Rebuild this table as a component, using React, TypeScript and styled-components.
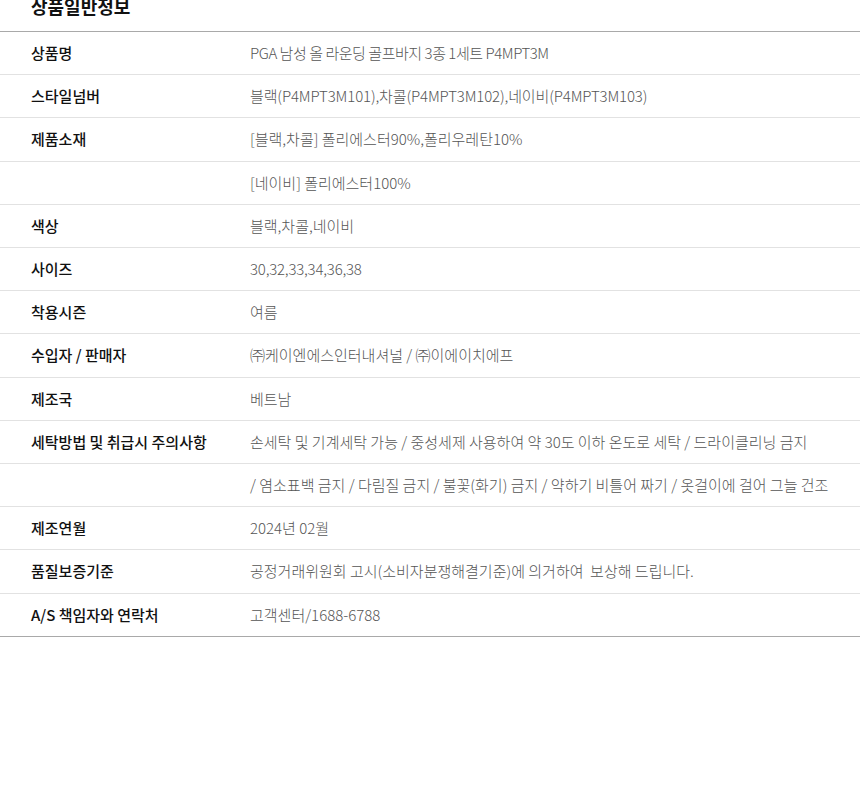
import React from "react";
import styled, { createGlobalStyle } from "styled-components";

const Global = createGlobalStyle`
  html, body { margin: 0; padding: 0; background: #fff; }
  body { font-family: "Noto Sans CJK KR", "Noto Sans", sans-serif; overflow: hidden; }
`;

const Section = styled.section`
  width: 860px;
`;

const Title = styled.h2`
  margin: -3px 0 16px;
  padding-left: 31px;
  font-size: 18px;
  line-height: 18px;
  font-weight: 700;
  color: #111;
`;

const Table = styled.table`
  width: 100%;
  border-collapse: collapse;
  border-top: 1px solid #a9a9a9;
  border-bottom: 1px solid #a9a9a9;
`;

const Row = styled.tr`
  border-top: 1px solid #e2e2e2;
  &:first-child { border-top: none; }
`;

const Label = styled.th`
  width: 219px;
  padding: 11px 0 11px 31px;
  text-align: left;
  font-size: 15px;
  line-height: 20.2px;
  font-weight: 500;
  color: #111;
  white-space: nowrap;
  vertical-align: middle;
`;

const Value = styled.td<{ $ls: number }>`
  padding: 11px 0;
  font-size: 15px;
  line-height: 20.2px;
  letter-spacing: ${(p) => p.$ls}px;
  font-weight: 300;
  color: #555;
  white-space: pre;
  vertical-align: middle;
`;

type Item = { label: string; value: string; ls?: number };

const rows: Item[] = [
  { label: "상품명", value: "PGA 남성 올 라운딩 골프바지 3종 1세트 P4MPT3M", ls: -0.45 },
  { label: "스타일넘버", value: "블랙(P4MPT3M101),차콜(P4MPT3M102),네이비(P4MPT3M103)", ls: -0.14 },
  { label: "제품소재", value: "[블랙,차콜] 폴리에스터90%,폴리우레탄10%" },
  { label: "", value: "[네이비] 폴리에스터100%" },
  { label: "색상", value: "블랙,차콜,네이비" },
  { label: "사이즈", value: "30,32,33,34,36,38", ls: -0.2 },
  { label: "착용시즌", value: "여름" },
  { label: "수입자 / 판매자", value: "㈜케이엔에스인터내셔널 / ㈜이에이치에프" },
  { label: "제조국", value: "베트남" },
  { label: "세탁방법 및 취급시 주의사항", value: "손세탁 및 기계세탁 가능 / 중성세제 사용하여 약 30도 이하 온도로 세탁 / 드라이클리닝 금지" },
  { label: "", value: "/ 염소표백 금지 / 다림질 금지 / 불꽃(화기) 금지 / 약하기 비틀어 짜기 / 옷걸이에 걸어 그늘 건조" },
  { label: "제조연월", value: "2024년 02월" },
  { label: "품질보증기준", value: "공정거래위원회 고시(소비자분쟁해결기준)에 의거하여  보상해 드립니다." },
  { label: "A/S 책임자와 연락처", value: "고객센터/1688-6788" },
];

export default function App() {
  return (
    <Section>
      <Global />
      <Title>상품일반정보</Title>
      <Table>
        <tbody>
          {rows.map((r, i) => (
            <Row key={i}>
              <Label>{r.label}</Label>
              <Value $ls={r.ls ?? 0}>{r.value}</Value>
            </Row>
          ))}
        </tbody>
      </Table>
    </Section>
  );
}
